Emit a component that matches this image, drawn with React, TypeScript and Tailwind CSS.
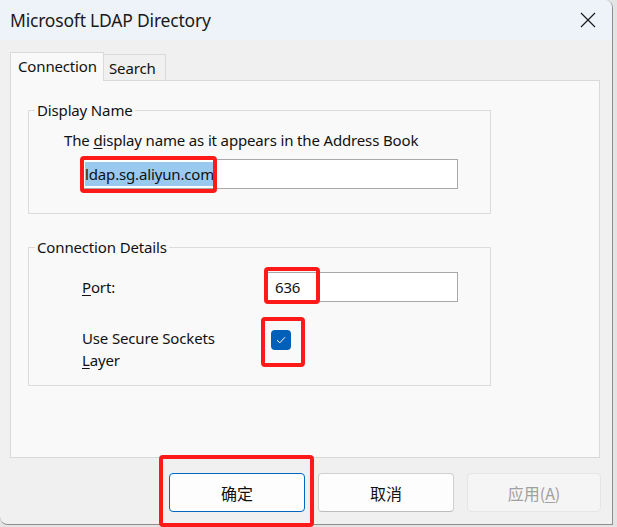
import React from 'react';

const latin = { fontFamily: '"Noto Sans", "Noto Sans CJK SC", sans-serif' };
const cjk = { fontFamily: '"Noto Sans CJK SC", "Noto Sans", sans-serif' };

function RedMark({ className }: { className: string }) {
  return <div className={`absolute border-[4px] border-[#ff1a1a] rounded-[4px] pointer-events-none ${className}`} />;
}

function CloseIcon() {
  return (
    <svg width="16" height="16" viewBox="0 0 16 16" className="text-[#1a1a1a]">
      <path d="M1 1 L15 15 M15 1 L1 15" stroke="currentColor" strokeWidth="1.2" fill="none" />
    </svg>
  );
}

export default function App() {
  return (
    <div className="relative w-[617px] h-[527px] bg-[#e4e4e4] overflow-hidden" style={latin}>
      {/* dialog window */}
      <div className="w-[613px] h-[525px] flex flex-col bg-[#f0f0f0] border-r border-b border-[#8e8e8e] rounded-tr-[8px] rounded-bl-[8px] overflow-hidden">
        {/* title bar */}
        <div className="h-[40px] shrink-0 bg-[#eef3fa] flex items-center justify-between pl-[10px] pr-[16px]">
          <span className="text-[17.5px] text-[#1a1a1a] tracking-[-0.2px]">Microsoft LDAP Directory</span>
          <CloseIcon />
        </div>

        {/* body */}
        <div className="flex-1 flex flex-col pl-[10px] pr-[12px] pt-[12px] text-[15px] tracking-[-0.15px] text-[#111]">
          {/* tabs */}
          <div className="h-[28px] flex items-end">
            <div className="h-[29px] w-[94px] -mb-px relative z-10 bg-[#f9f9f9] border border-b-0 border-[#d9d9d9] pl-[7px] leading-[26px]">
              Connection
            </div>
            <div className="h-[26px] w-[62px] bg-[#f0f0f0] border border-l-0 border-b-0 border-[#d9d9d9] pl-[5px] leading-[27px]">
              Search
            </div>
          </div>

          {/* tab panel */}
          <div className="h-[378px] bg-[#f9f9f9] border border-[#d9d9d9] pl-[17px] pt-[19px]">
            <fieldset className="w-[463px] h-[114px] border border-[#dcdcdc]">
              <legend className="ml-[6px] px-[2px] leading-[20px]">Display Name</legend>
              <div className="pl-[35px]">
                <div className="leading-[20px] mt-[10px]">
                  The <span className="underline underline-offset-2">d</span>isplay name as it appears in the Address Book
                </div>
                <div className="ml-[18px] mt-[9px] w-[376px] h-[30px] bg-white border border-[#a8a8a8] flex items-center pl-[2px]">
                  <span className="bg-[#99c9ef] leading-[24px] pr-[1px]">ldap.sg.aliyun.com</span>
                </div>
              </div>
            </fieldset>

            <fieldset className="mt-[23px] w-[463px] h-[149px] border border-[#dcdcdc]">
              <legend className="ml-[6px] px-[2px] leading-[20px]">Connection Details</legend>
              <div className="pl-[53px]">
                <div className="flex items-center mt-[15px]">
                  <span className="w-[184px] leading-[20px]">
                    <span className="underline underline-offset-2">P</span>ort:
                  </span>
                  <div className="w-[192px] h-[30px] bg-white border border-[#a8a8a8] flex items-center pl-[8px]">
                    636
                  </div>
                </div>
                <div className="flex items-start mt-[25px]">
                  <div className="w-[189px] leading-[22px]">
                    Use Secure Sockets
                    <br />
                    <span className="underline underline-offset-2">L</span>ayer
                  </div>
                  <div className="mt-[3px] w-[20px] h-[20px] rounded-[4px] bg-[#005fb8] flex items-center justify-center">
                    <svg width="10" height="8" viewBox="0 0 10 8">
                      <path d="M1 4.2 L3.8 6.8 L9 1.2" stroke="white" strokeWidth="1" fill="none" />
                    </svg>
                  </div>
                </div>
              </div>
            </fieldset>
          </div>

          {/* buttons */}
          <div className="flex justify-end gap-[13px] mt-[15px] -mr-px tracking-normal" style={cjk}>
            <button className="w-[136px] h-[39px] rounded-[4px] bg-[#fdfdfd] border border-[#0067c0] text-[16px] text-[#111]">
              确定
            </button>
            <button className="w-[136px] h-[39px] rounded-[4px] bg-[#fdfdfd] border border-[#d0d0d0] border-b-[#bcbcbc] text-[16px] text-[#111]">
              取消
            </button>
            <button className="w-[134px] h-[39px] rounded-[4px] bg-[#f5f5f5] border border-[#e5e5e5] text-[16px] text-[#a0a0a0]">
              应用(<span className="underline underline-offset-2">A</span>)
            </button>
          </div>
        </div>
      </div>

      {/* annotation marks */}
      <RedMark className="left-[80px] top-[156px] w-[137px] h-[37px]" />
      <RedMark className="left-[264px] top-[267px] w-[56px] h-[37px]" />
      <RedMark className="left-[261px] top-[317px] w-[44px] h-[50px]" />
      <RedMark className="left-[159px] top-[455px] w-[155px] h-[72px]" />
    </div>
  );
}
